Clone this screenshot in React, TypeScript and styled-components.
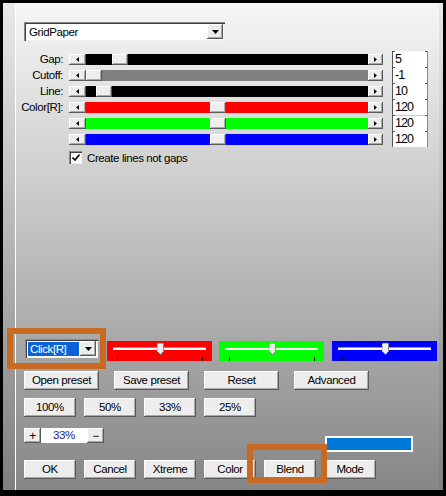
import React from "react";
import styled, { createGlobalStyle } from "styled-components";

const GlobalStyle = createGlobalStyle`
  html, body {
    margin: 0;
    padding: 0;
    background: #000;
  }
  body {
    font-family: "Liberation Sans", Arial, sans-serif;
    font-size: 11.5px;
    letter-spacing: -0.4px;
    color: #000;
  }
`;

// outer black frame and the dialog surface
const Frame = styled.div`
  position: relative;
  width: 446px;
  height: 496px;
  box-sizing: border-box;
  padding: 3px 3px 6px 3px;
  background: #000;
`;

const Surface = styled.div`
  display: flex;
  height: 100%;
  background: linear-gradient(to bottom, #f6f6f6 0%, #868686 100%);
`;

const SideStrip = styled.div`
  flex: none;
  width: 12px;
  background: rgba(0, 0, 0, 0.05);
  border-right: 1px solid #fff;
`;

const Main = styled.div`
  flex: 1;
  display: flex;
  flex-direction: column;
  padding-top: 19px;
  border-right: 4px solid rgba(0, 0, 0, 0.05);
`;

const raised = `
  background: #ededed;
  box-shadow: inset -1px -1px #5a5a5a, inset 1px 1px #fff, inset -2px -2px #a8a8a8;
`;

const sunken = `
  background: #fff;
  box-shadow: inset 1px 1px #8a8a8a, inset 2px 2px #404040, inset -1px -1px #f0f0f0;
`;

// combo boxes
const Combo = styled.div<{ $width: number }>`
  display: flex;
  align-items: center;
  justify-content: space-between;
  box-sizing: border-box;
  width: ${(p) => p.$width}px;
  height: 19px;
  padding: 2px 2px 2px 3px;
  ${sunken}
`;

const ComboText = styled.span<{ $selected?: boolean }>`
  padding: 0 2px;
  line-height: 14px;
  white-space: nowrap;
  ${(p) => (p.$selected ? "background: #0a62d6; color: #fff; flex: 1; margin-right: 1px;" : "")}
`;

const ComboButton = styled.div`
  flex: none;
  display: flex;
  align-items: center;
  justify-content: center;
  width: 16px;
  height: 15px;
  ${raised}
`;

const TopCombo = styled.div`
  margin-left: 8px;
  margin-bottom: 10px;
`;

// scrollbar-like sliders
const SliderBlock = styled.div`
  display: flex;
  flex-direction: column;
`;

const SliderRow = styled.div`
  display: flex;
  align-items: center;
  height: 16px;
`;

const Label = styled.span`
  width: 47px;
  margin-right: 6px;
  text-align: right;
  white-space: nowrap;
`;

const ArrowButton = styled.div<{ $width: number }>`
  flex: none;
  display: flex;
  align-items: center;
  justify-content: center;
  box-sizing: border-box;
  width: ${(p) => p.$width}px;
  height: 11px;
  ${raised}
`;

const Track = styled.div`
  display: flex;
  width: 282px;
  height: 11px;
`;

const Fill = styled.div<{ $color: string; $width?: number }>`
  background: ${(p) => p.$color};
  ${(p) => (p.$width !== undefined ? `flex: none; width: ${p.$width}px;` : "flex: 1;")}
`;

const Thumb = styled.div`
  flex: none;
  width: 16px;
  height: 11px;
  ${raised}
`;

const ValueCell = styled.div<{ $divider?: boolean }>`
  position: relative;
  box-sizing: border-box;
  width: 36px;
  height: 16px;
  margin-left: 9px;
  padding-left: 2px;
  background: #fff;
  border-left: 1px solid #555;
  border-right: 1px solid #888;
  font-size: 12.5px;
  letter-spacing: -1px;
  line-height: 16px;
  ${(p) => (p.$divider ? "box-shadow: inset 0 1px #c8c8c8;" : "")}
  &::before,
  &::after {
    content: "";
    position: absolute;
    top: 0;
    width: 2px;
    height: 1px;
    background: #555;
  }
  &::before {
    left: 0;
  }
  &::after {
    right: 0;
  }
`;

const CheckRow = styled.label`
  display: flex;
  align-items: center;
  gap: 5px;
  margin: 4px 0 0 53px;
  height: 13px;
`;

const CheckBox = styled.span`
  flex: none;
  display: flex;
  align-items: center;
  justify-content: center;
  width: 13px;
  height: 13px;
  box-sizing: border-box;
  ${sunken}
`;

// lower part: colour pickers and buttons
const Bottom = styled.div`
  display: flex;
  flex-direction: column;
  margin-top: 175px;
  padding-left: 8px;
`;

const Row = styled.div<{ $top: number; $gap?: number }>`
  display: flex;
  align-items: flex-start;
  margin-top: ${(p) => p.$top}px;
  gap: ${(p) => p.$gap ?? 0}px;
`;

const ColorPanel = styled.div<{ $color: string; $left: number }>`
  position: relative;
  flex: none;
  box-sizing: border-box;
  width: 105px;
  height: 20px;
  margin: 2px 0 0 ${(p) => p.$left}px;
  padding: 6px 6px 0;
  background: ${(p) => p.$color};
`;

const PanelTrack = styled.div`
  height: 3px;
  background: #fff;
  box-shadow: inset 0 1px #9a9a9a;
`;

const Ticks = styled.div`
  display: flex;
  justify-content: space-between;
  margin-top: 7px;
  padding: 0 3px 0 4px;
`;

const Tick = styled.span`
  width: 1px;
  height: 4px;
  background: #000;
`;

const PanelThumb = styled.svg`
  position: absolute;
  left: 50%;
  top: 2px;
  margin-left: -3px;
`;

const Button = styled.div<{ $width: number }>`
  flex: none;
  display: flex;
  align-items: center;
  justify-content: center;
  box-sizing: border-box;
  width: ${(p) => p.$width}px;
  height: 19px;
  padding-bottom: 1px;
  white-space: nowrap;
  ${raised}
`;

const StepButton = styled.div`
  flex: none;
  display: flex;
  align-items: center;
  justify-content: center;
  width: 17px;
  height: 15px;
  font-size: 12px;
  ${raised}
`;

const StepField = styled.div`
  width: 46px;
  height: 15px;
  background: #fff;
  color: #1c1c8e;
  text-align: center;
  line-height: 15px;
`;

const ColorSwatch = styled.div`
  box-sizing: border-box;
  width: 88px;
  height: 16px;
  margin: 8px 0 0 221px;
  background: #0078d7;
  border: 2px solid #fff;
`;

// orange highlight frames drawn over the dialog
const Highlight = styled.div<{ $x: number; $y: number; $w: number; $h: number }>`
  position: absolute;
  left: ${(p) => p.$x}px;
  top: ${(p) => p.$y}px;
  width: ${(p) => p.$w}px;
  height: ${(p) => p.$h}px;
  box-sizing: border-box;
  border: 6px solid #c86a22;
  pointer-events: none;
`;

const DownArrow = () => (
  <svg width="7" height="4" viewBox="0 0 7 4">
    <path d="M0 0h7L3.5 4z" fill="#000" />
  </svg>
);

const SideArrow = ({ dir }: { dir: "left" | "right" }) => (
  <svg width="3" height="5" viewBox="0 0 3 5">
    <path d={dir === "left" ? "M3 0v5L0 2.5z" : "M0 0v5L3 2.5z"} fill="#000" />
  </svg>
);

const sliders = [
  { label: "Gap:", color: "#000", pos: 26, value: "5" },
  { label: "Cutoff:", color: "#808080", pos: 0, value: "-1" },
  { label: "Line:", color: "#000", pos: 10, value: "10" },
  { label: "Color[R]:", color: "#ff0000", pos: 124, value: "120" },
  { label: "", color: "#00ff00", pos: 124, value: "120", divider: true },
  { label: "", color: "#0000ff", pos: 124, value: "120" },
];

const panels = [
  { color: "#ff0000", left: 9 },
  { color: "#00ff00", left: 7 },
  { color: "#0000ff", left: 8 },
];

const App: React.FC = () => {
  return (
    <>
      <GlobalStyle />
      <Frame>
        <Surface>
          <SideStrip />
          <Main>
            <TopCombo>
              <Combo $width={201}>
                <ComboText>GridPaper</ComboText>
                <ComboButton>
                  <DownArrow />
                </ComboButton>
              </Combo>
            </TopCombo>

            <SliderBlock>
              {sliders.map((s, i) => (
                <SliderRow key={i}>
                  <Label>{s.label}</Label>
                  <ArrowButton $width={17}>
                    <SideArrow dir="left" />
                  </ArrowButton>
                  <Track>
                    <Fill $color={s.color} $width={s.pos} />
                    <Thumb />
                    <Fill $color={s.color} />
                  </Track>
                  <ArrowButton $width={15}>
                    <SideArrow dir="right" />
                  </ArrowButton>
                  <ValueCell $divider={s.divider}>{s.value}</ValueCell>
                </SliderRow>
              ))}
              <CheckRow>
                <CheckBox>
                  <svg width="8" height="7" viewBox="0 0 8 7">
                    <path d="M0.5 3.5l2.5 2.5 4.5-5.5" fill="none" stroke="#000" strokeWidth="1.6" />
                  </svg>
                </CheckBox>
                Create lines not gaps
              </CheckRow>
            </SliderBlock>

            <Bottom>
              <Row $top={0}>
                <div style={{ marginLeft: 1 }}>
                  <Combo $width={73}>
                    <ComboText $selected>Click[R]</ComboText>
                    <ComboButton>
                      <DownArrow />
                    </ComboButton>
                  </Combo>
                </div>
                {panels.map((p) => (
                  <ColorPanel key={p.color} $color={p.color} $left={p.left}>
                    <PanelTrack />
                    <Ticks>
                      <Tick />
                      <Tick />
                    </Ticks>
                    <PanelThumb width="7" height="12" viewBox="0 0 7 12">
                      <path d="M0.5 0.5h6v8l-3 3-3-3z" fill="#ececec" stroke="#8a8a8a" />
                      <path d="M1 9V1h5" fill="none" stroke="#fff" />
                    </PanelThumb>
                  </ColorPanel>
                ))}
              </Row>

              <Row $top={10} $gap={15}>
                <Button $width={75}>Open preset</Button>
                <Button $width={75}>Save preset</Button>
                <Button $width={75}>Reset</Button>
                <Button $width={75}>Advanced</Button>
              </Row>

              <Row $top={8} $gap={8}>
                <Button $width={52}>100%</Button>
                <Button $width={52}>50%</Button>
                <Button $width={52}>33%</Button>
                <Button $width={52}>25%</Button>
              </Row>

              <Row $top={11}>
                <StepButton>+</StepButton>
                <StepField>33%</StepField>
                <StepButton>−</StepButton>
                <ColorSwatch />
              </Row>

              <Row $top={8} $gap={8}>
                <Button $width={52}>OK</Button>
                <Button $width={52}>Cancel</Button>
                <Button $width={52}>Xtreme</Button>
                <Button $width={52}>Color</Button>
                <Button $width={52}>Blend</Button>
                <Button $width={52}>Mode</Button>
              </Row>
            </Bottom>
          </Main>
        </Surface>
        <Highlight $x={7} $y={328} $w={99} $h={41} />
        <Highlight $x={247} $y={444} $w={80} $h={39} />
      </Frame>
    </>
  );
};

export default App;
